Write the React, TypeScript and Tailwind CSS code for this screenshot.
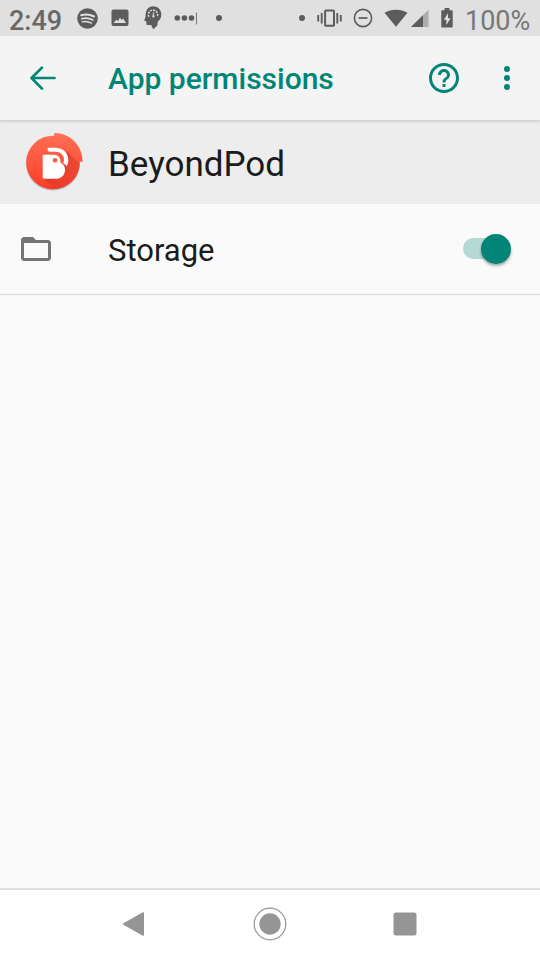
const TEAL = '#008577';

function StatusBar() {
  return (
    <div className="flex h-9 shrink-0 items-center bg-[#e0e0e0] text-[#5c5c5c]">
      <span className="ml-[9px] w-[54px] whitespace-nowrap pt-[5px] text-[27px] leading-8 font-medium text-[#686868]">2:49</span>
      <svg className="ml-[13.500px] shrink-0" width="21" height="21" viewBox="0 0 21 21">
        <circle cx="10.500" cy="10.500" r="10.300" fill="currentColor" />
        <g fill="none" stroke="#e0e0e0" strokeLinecap="round">
          <path d="M4.200 7.200c4.200-1.200 9-.8 12.800 1.300" strokeWidth="2" />
          <path d="M4.700 10.700c3.800-1 7.700-.6 11.100 1.300" strokeWidth="1.600" />
          <path d="M5.200 13.900c3.300-.8 6.300-.4 9.200 1.200" strokeWidth="1.300" />
        </g>
      </svg>
      <svg className="ml-[13.500px] shrink-0" width="18" height="18" viewBox="0 0 18 18">
        <rect x=".5" y=".5" width="17" height="16.500" rx="2" fill="currentColor" />
        <path d="M2.600 14l2.800-3.600 1.600 1.800 2-3.700 1.600 2.600 1.500-1.600 3 4.500z" fill="#e0e0e0" />
      </svg>
      <svg className="ml-[14px] shrink-0" width="19" height="24" viewBox="0 0 19 24">
        <path d="M9.800.3c5 0 8.500 3.500 8.500 8.200 0 3.300-1.400 5.300-3.600 7.400l-.3 3.500-4.200 3.900-2.100-4.200H3.600l-.4-3.900-2-.5 1.400-4.400C2.400 3.700 5.600.3 9.800.3z" fill="currentColor" />
        <path d="M5.900 10.700a4.600 4.600 0 1 1 8.200.1" fill="none" stroke="#e0e0e0" strokeWidth="1.400" strokeDasharray="2.100 1" />
        <path d="M9.400 11l1.200-5 .6 5.300z" fill="#e0e0e0" stroke="#e0e0e0" strokeWidth=".4" />
      </svg>
      <svg className="ml-[11.500px] shrink-0" width="24" height="14" viewBox="0 0 24 14">
        <circle cx="3.300" cy="7" r="2.800" fill="currentColor" />
        <circle cx="10.400" cy="7" r="2.800" fill="currentColor" />
        <circle cx="17.500" cy="7" r="2.800" fill="currentColor" />
        <path d="M22.500 1.500v12" stroke="#777777" strokeWidth="1" />
      </svg>
      <span className="ml-[18px] size-1.5 rounded-full bg-[#5c5c5c]" />
      <span className="ml-[77.500px] size-1.5 rounded-full bg-[#5c5c5c]" />
      <svg className="ml-[11.500px] shrink-0" width="25" height="18" viewBox="0 0 25 18">
        <path d="M1.200 6v6.500M4.700 4v10.500M20.300 4v10.500M23.800 6v6.500" stroke="currentColor" strokeWidth="1.900" />
        <rect x="8.100" y="1.400" width="8.900" height="15.400" rx=".8" fill="none" stroke="currentColor" strokeWidth="2" />
      </svg>
      <svg className="ml-[11.500px] shrink-0" width="20" height="20" viewBox="0 0 20 20" fill="none" stroke="currentColor">
        <circle cx="10" cy="10" r="8.600" strokeWidth="1.600" />
        <path d="M5.700 10h8.800" strokeWidth="1.700" />
      </svg>
      <svg className="ml-[11px] shrink-0" width="24" height="18" viewBox="0 0 24 18">
        <path d="M.5 3.800C7-.4 17-.4 23.500 3.800L12 17.800z" fill="currentColor" />
      </svg>
      <svg className="ml-[3px] shrink-0" width="18" height="18" viewBox="0 0 18 18">
        <path d="M0 18L17.500.8V18z" fill="#adadad" />
        <path d="M0 18L12 6.200V18z" fill="currentColor" />
      </svg>
      <svg className="ml-[11.500px] shrink-0" width="12" height="20" viewBox="0 0 12 20">
        <path d="M3.600 0h4.800v2.200h2.300c.6 0 1 .4 1 1v15.200c0 .6-.4 1-1 1H1.300c-.6 0-1-.4-1-1V3.200c0-.6.4-1 1-1h2.300z" fill="currentColor" />
        <path d="M7 5.200L2.800 11.700h2.600V17l4.200-6.800H7z" fill="#e0e0e0" />
      </svg>
      <span className="ml-[12.500px] whitespace-nowrap pt-[5px] text-[27px] leading-8 text-[#777777]">100%</span>
    </div>
  );
}

function Toolbar() {
  return (
    <header className="z-10 flex h-[84px] shrink-0 items-center bg-[#f4f4f4] text-[#008577] shadow-[0_2px_2px_rgba(0,0,0,0.12)]">
      <svg className="ml-[29px] shrink-0" width="28" height="26" viewBox="0 0 28 26" fill="none" stroke={TEAL} strokeWidth="2.700" strokeLinecap="round" strokeLinejoin="round">
        <path d="M25.500 13H2.500M13 2.600L2.500 13 13 23.600" />
      </svg>
      <h1 className="ml-[51px] w-[318px] whitespace-nowrap pt-0.5 text-[30px] leading-9 font-medium">App permissions</h1>
      <svg className="shrink-0" width="36" height="36" viewBox="0 0 24 24" fill={TEAL}>
        <path d="M11 18h2v-2h-2v2zm1-16C6.480 2 2 6.480 2 12s4.480 10 10 10 10-4.480 10-10S17.520 2 12 2zm0 18c-4.410 0-8-3.590-8-8s3.590-8 8-8 8 3.590 8 8-3.590 8-8 8zm0-14c-2.210 0-4 1.790-4 4h2c0-1.100.9-2 2-2s2 .9 2 2c0 2-3 1.750-3 5h2c0-2.250 3-2.500 3-5 0-2.210-1.790-4-4-4z" />
      </svg>
      <svg className="ml-[27px] shrink-0" width="36" height="36" viewBox="0 0 24 24" fill={TEAL}>
        <circle cx="12" cy="6" r="2" />
        <circle cx="12" cy="12" r="2" />
        <circle cx="12" cy="18" r="2" />
      </svg>
    </header>
  );
}

function BeyondPodIcon() {
  return (
    <svg className="ml-6 shrink-0" width="60" height="62" viewBox="0 0 60 62">
      <defs>
        <linearGradient id="disc" x1="0" y1="0" x2="0" y2="1">
          <stop offset="0" stopColor="#ff7055" />
          <stop offset="1" stopColor="#fb3d28" />
        </linearGradient>
        <linearGradient id="cast" x1="0" y1="0" x2="1" y2="1">
          <stop offset=".2" stopColor="#b92d20" stopOpacity=".6" />
          <stop offset=".85" stopColor="#d83a2a" stopOpacity="0" />
        </linearGradient>
        <clipPath id="discClip">
          <circle cx="29" cy="31.500" r="26.800" />
        </clipPath>
      </defs>
      <circle cx="29" cy="32.700" r="26.900" fill="#000" opacity=".22" />
      <path d="M30.200 2c15.800 0 28.400 12.300 28.400 28.700H55.800A26.800 26.800 0 1 1 30.200 4.700z" fill="url(#disc)" />
      <path d="M43 20l22 22-22 26L19.500 47.500 36 44z" fill="url(#cast)" clipPath="url(#discClip)" />
      <path fillRule="evenodd" d="M18.700 23.700H29c4.700 0 7.400 2.700 7.400 6.600v1.300c2.800 1.300 4.600 3.800 4.600 7.200 0 5.200-3.600 9-8.600 9H20.500c-1.200 0-1.800-.6-1.800-1.800zM31 27a2.300 2.300 0 1 0 0 4.600 2.300 2.300 0 0 0 0-4.600z" fill="#fff" />
      <path d="M23.700 16.700H31c8.200 0 13.300 5.200 13.300 12.300 0 2.300-.5 4.300-1.500 6l-3.600-3c.5-1 .8-2 .8-3.200 0-4.800-3.500-8.100-8.800-8.100h-5.300c-1.600 0-2.200-.7-2.200-2.200z" fill="#fff" />
    </svg>
  );
}

function NavBar() {
  return (
    <nav className="flex h-[72px] shrink-0 items-center border-t-2 border-[#dedede] bg-white pb-[2px]">
      <svg className="ml-[122px] shrink-0" width="23" height="26" viewBox="0 0 23 26">
        <path d="M1.800 13L21.200 2v22z" fill="#959595" stroke="#959595" strokeWidth="1.600" strokeLinejoin="round" />
      </svg>
      <svg className="ml-[108px] shrink-0" width="34" height="34" viewBox="0 0 34 34">
        <circle cx="17" cy="17" r="15.800" fill="none" stroke="#959595" strokeWidth="1.200" />
        <circle cx="17" cy="17" r="10.700" fill="#959595" />
      </svg>
      <svg className="ml-[106px] shrink-0" width="24" height="24" viewBox="0 0 24 24">
        <rect x=".5" y=".5" width="23" height="23" rx="2.500" fill="#959595" />
      </svg>
    </nav>
  );
}

export default function App() {
  return (
    <div className="flex h-[960px] w-[540px] flex-col overflow-hidden bg-[#fafafa] font-[Roboto,sans-serif] text-[#1b1b1b]">
      <StatusBar />
      <Toolbar />
      <section className="flex h-[84px] shrink-0 items-center bg-[#ededed]">
        <BeyondPodIcon />
        <h2 className="ml-6 pt-[5px] text-[35px] leading-10">BeyondPod</h2>
      </section>
      <main className="flex-1">
        <div className="flex h-[91px] items-center border-b border-[#d8d8d8]">
          <svg className="ml-[18px] shrink-0" width="36" height="36" viewBox="0 0 24 24" fill="#757575">
            <path d="M20 6h-8l-2-2H4c-1.100 0-1.990.9-1.990 2L2 18c0 1.100.9 2 2 2h16c1.100 0 2-.9 2-2V8c0-1.100-.9-2-2-2zm0 12H4V8h16v10z" />
          </svg>
          <span className="ml-[54px] flex-1 pt-[3px] text-[31px] leading-9">Storage</span>
          <div role="switch" aria-checked="true" className="mr-[29.500px] mb-px flex h-[21px] w-[48px] items-center justify-end rounded-full bg-[#b5dad5]">
            <span className="size-[30px] shrink-0 rounded-full bg-[#008577] shadow-[0_2px_3px_rgba(0,0,0,0.35)]" />
          </div>
        </div>
      </main>
      <NavBar />
    </div>
  );
}
